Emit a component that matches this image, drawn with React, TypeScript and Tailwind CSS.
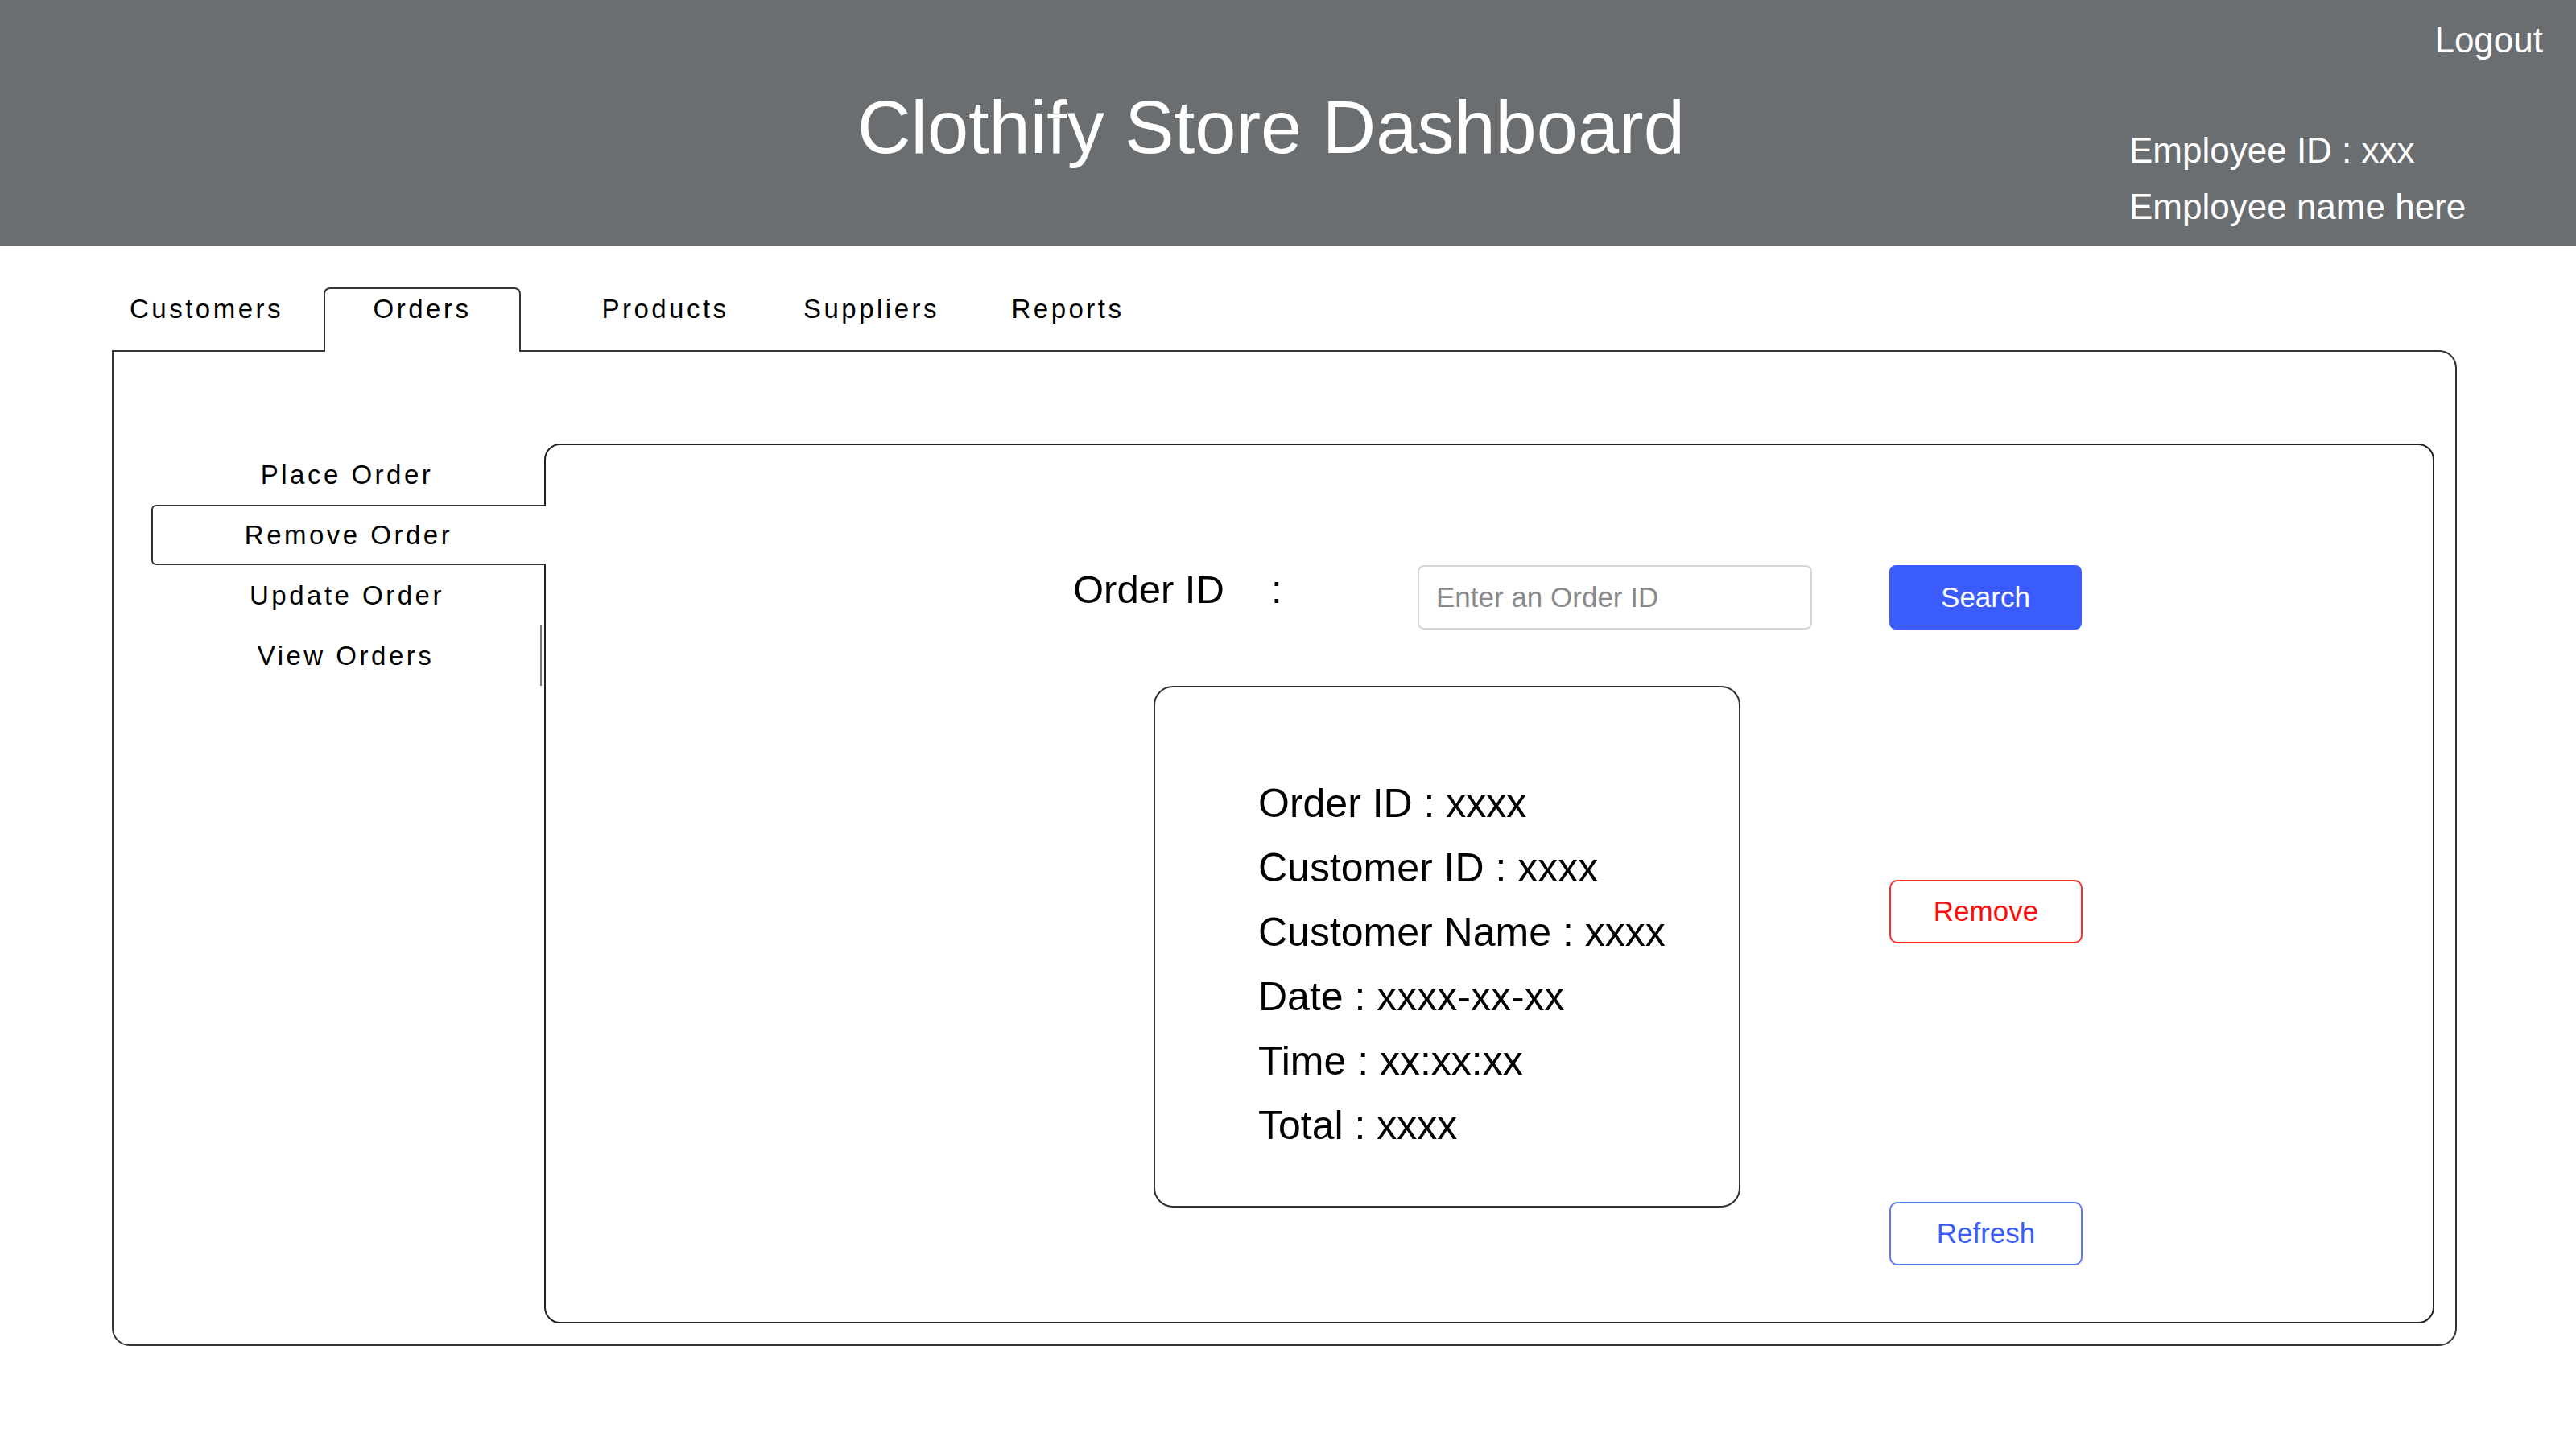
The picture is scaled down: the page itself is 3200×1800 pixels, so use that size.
import React from 'react'

const tabs = [
  { label: 'Customers', box: 'w-[263px] pl-[22px] text-left' },
  { label: 'Orders', active: true },
  { label: 'Products', box: 'ml-[53px] w-[253px] text-center' },
  { label: 'Suppliers', box: 'w-[259px] text-center' },
  { label: 'Reports', box: 'w-[229px] text-center' },
]

const details = [
  'Order ID : xxxx',
  'Customer ID : xxxx',
  'Customer Name : xxxx',
  'Date : xxxx-xx-xx',
  'Time : xx:xx:xx',
  'Total : xxxx',
]

function Header() {
  return (
    <header className="flex h-[306px] bg-[#6b6e71] text-white">
      <div className="w-[2645px] pl-[1065px] pt-[112px]">
        <h1 className="text-[92px] leading-none font-normal">Clothify Store Dashboard</h1>
      </div>
      <div className="flex flex-1 flex-col">
        <button type="button" className="self-end mr-[41px] mt-[28px] text-[44px] leading-none">
          Logout
        </button>
        <div className="mt-[93px] text-[44px] leading-none">Employee ID : xxx</div>
        <div className="mt-[26px] text-[44px] leading-none">Employee name here</div>
      </div>
    </header>
  )
}

function Sidebar() {
  const item = 'text-[33px] leading-none tracking-[3.5px] text-black'
  return (
    <div className="ml-[47px] flex w-[488px] flex-col">
      <div className="flex h-[76px] items-center justify-center pr-[2px]">
        <span className={item}>Place Order</span>
      </div>
      <div className="relative z-10 -mr-[2px] flex h-[75px] items-center justify-center rounded-l-md border-2 border-r-0 border-[#333] bg-white pr-[2px]">
        <span className={item}>Remove Order</span>
      </div>
      <div className="flex h-[74px] items-center justify-center pr-[2px]">
        <span className={item}>Update Order</span>
      </div>
      <div className="flex h-[76px] items-center">
        <div className="flex flex-1 justify-center">
          <span className={item}>View Orders</span>
        </div>
        <div className="mr-[3px] h-full w-[2px] bg-[#777]" />
      </div>
    </div>
  )
}

function RemovePanel() {
  return (
    <div className="h-[1093px] flex-1 mr-[26px] rounded-[20px] border-2 border-[#222]">
      <div className="ml-[655px] mt-[149px] flex h-[80px] items-start">
        <span className="mt-[6px] w-[246px] text-[49px] leading-none">Order ID</span>
        <span className="mt-[6px] w-[182px] text-[49px] leading-none">:</span>
        <input
          type="text"
          placeholder="Enter an Order ID"
          className="h-[80px] w-[490px] rounded-[8px] border-2 border-[#d6d6d6] pl-[21px] text-[35px] text-black placeholder:text-[#8a8a8a] outline-none"
        />
        <button
          type="button"
          className="ml-[96px] h-[80px] w-[239px] rounded-[8px] bg-[#3a5cfc] text-[35px] text-white"
        >
          Search
        </button>
      </div>
      <div className="mt-[70px] flex">
        <div className="ml-[755px] h-[648px] w-[729px] rounded-[24px] border-2 border-[#333] pl-[128px] pt-[104px]">
          {details.map((d) => (
            <div key={d} className="text-[50px] leading-[80px] text-black">
              {d}
            </div>
          ))}
        </div>
        <div className="ml-[185px] flex flex-col">
          <button
            type="button"
            className="mt-[241px] h-[79px] w-[240px] rounded-[10px] border-2 border-[#ff2a2a] bg-white text-[35px] text-[#ff0d0d]"
          >
            Remove
          </button>
          <button
            type="button"
            className="mt-[321px] h-[79px] w-[240px] rounded-[10px] border-2 border-[#5a78fa] bg-white text-[35px] text-[#3a5cfc]"
          >
            Refresh
          </button>
        </div>
      </div>
    </div>
  )
}

export default function App() {
  return (
    <div className="h-[1800px] w-[3200px] bg-white font-['Liberation_Sans',Arial,sans-serif] text-black">
      <Header />
      <div className="ml-[139px] w-[2913px]">
        <div className="mt-[51px] flex h-[78px] items-start">
          {tabs.map((t) =>
            t.active ? (
              <div
                key={t.label}
                className="relative z-10 h-[80px] w-[245px] rounded-t-lg border-2 border-b-0 border-[#333] bg-white pt-[8px] text-center"
              >
                <span className="text-[33px] leading-none tracking-[3.5px]">{t.label}</span>
              </div>
            ) : (
              <div key={t.label} className={`pt-[10px] ${t.box}`}>
                <span className="text-[33px] leading-none tracking-[3.5px]">{t.label}</span>
              </div>
            )
          )}
        </div>
        <div className="flex h-[1237px] rounded-b-[22px] rounded-tr-[22px] border-2 border-[#333] pt-[114px]">
          <Sidebar />
          <RemovePanel />
        </div>
      </div>
    </div>
  )
}
